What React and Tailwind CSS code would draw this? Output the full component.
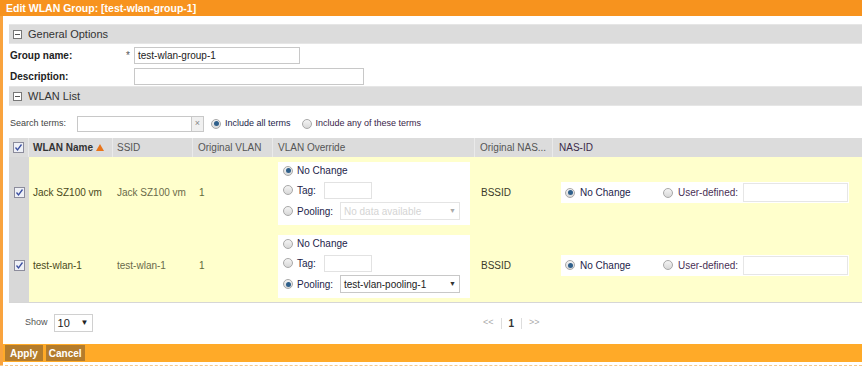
import React from 'react';

const font = { fontFamily: '"Liberation Sans", Arial, sans-serif' };

const Radio = ({ on }) => (
    <span className="inline-flex items-center justify-center w-[10px] h-[10px] rounded-full border border-[#a8a8a8] bg-gradient-to-b from-[#f4f4f4] to-[#d8d8d8] shrink-0">
        {on && <span className="w-[5px] h-[5px] rounded-full bg-[#2f5f8a]" />}
    </span>
);

const Check = () => (
    <span className="inline-flex items-center justify-center w-[11px] h-[11px] border border-[#8c8c9c] bg-[#eef0f6] shrink-0">
        <svg width="9" height="9" viewBox="0 0 9 9">
            <path d="M1.5 4.5 L3.5 7 L7.5 1.5" fill="none" stroke="#3b4fa0" strokeWidth="1.3" />
        </svg>
    </span>
);

const Minus = () => (
    <span className="inline-flex items-center justify-center w-[9px] h-[9px] border border-[#777] bg-white">
        <span className="w-[5px] h-[1px] bg-[#555]" />
    </span>
);

const SectionHeader = ({ title }) => (
    <div className="h-[20px] bg-[#dcdcdc] border-y border-[#e6e6e6] flex items-center gap-[6px] pl-[4px] text-[11px] text-[#333]">
        <Minus />
        <span>{title}</span>
    </div>
);

const Override = ({ pooling, value }) => (
    <div className="bg-white w-[192px] h-[63px] flex flex-col pl-[5px] text-[10px] text-[#1d1d4a]">
        <div className="flex items-center gap-[4px] h-[17px]">
            <Radio on={!pooling} />
            <span>No Change</span>
        </div>
        <div className="flex items-center gap-[4px] h-[20px] mt-[1px]">
            <Radio />
            <span className="w-[23px]">Tag:</span>
            <span className="w-[48px] h-[17px] border border-[#e2e2e2] bg-white" />
        </div>
        <div className="flex items-center gap-[4px] h-[22px]">
            <Radio on={pooling} />
            <span className="w-[39px]">Pooling:</span>
            <span className={`flex items-center justify-between w-[120px] h-[18px] border px-[3px] ${pooling ? 'border-[#c8c8c8] text-[#222]' : 'border-[#e4e4e4] text-[#d4d4d4]'}`}>
                <span>{value}</span>
                <span className={`text-[7px] ${pooling ? 'text-[#333]' : 'text-[#aaa]'}`}>▼</span>
            </span>
        </div>
    </div>
);

const NasId = () => (
    <div className="bg-white w-[288px] h-[21px] flex items-center text-[10px] ml-[8px]">
        <div className="flex items-center gap-[5px] pl-[4px] w-[102px] text-[#1d1d4a]">
            <Radio on />
            <span>No Change</span>
        </div>
        <div className="flex items-center gap-[5px] text-[#4a2f55]">
            <Radio />
            <span>User-defined:</span>
        </div>
        <span className="ml-[5px] w-[105px] h-[19px] border border-[#e6e6e6]" />
    </div>
);

const Row = ({ name, ssid, pooling, value, h, boxPad }) => (
    <div className={`flex ${h} bg-[#ffffcc] text-[10px]`}>
        <div className="w-[20px] bg-[#d8d8d8] flex items-center justify-center">
            <Check />
        </div>
        <div className="w-[84px] flex items-center pl-[4px] text-[#4a4a20]">{name}</div>
        <div className="w-[80px] flex items-center pl-[4px] text-[#6a6a4a]">{ssid}</div>
        <div className="w-[80px] flex items-center pl-[6px] text-[#5f6a3a]">1</div>
        <div className={`w-[202px] flex items-start ${boxPad} pl-[5px]`}>
            <Override pooling={pooling} value={value} />
        </div>
        <div className="w-[78px] flex items-center pl-[6px] text-[#3a3a2a]">BSSID</div>
        <div className="flex-1 flex items-center">
            <NasId />
        </div>
    </div>
);

const App = () => {
    return (
        <div className="w-[865px] h-[369px] bg-white relative overflow-hidden" style={font}>
            <div className="w-[862px] h-[16px] bg-[#f7931e] text-white font-bold text-[10.5px] leading-[16px] pl-[6px]">
                Edit WLAN Group: [test-wlan-group-1]
            </div>
            <div className="w-[862px] h-[350px] border-l-[3px] border-[#f9a33e] flex flex-col">
                <div className="pl-[6px] pt-[8px]">
                    <SectionHeader title="General Options" />
                    <div className="flex items-center h-[22px] text-[10px] text-[#222]">
                        <span className="w-[117px] pl-[1px] font-bold">Group name:</span>
                        <span className="w-[8px] text-[#555]">*</span>
                        <span className="w-[166px] h-[17px] border border-[#c8c8c8] flex items-center pl-[3px] text-[#222] font-normal">test-wlan-group-1</span>
                    </div>
                    <div className="flex items-center h-[20px] text-[10px] text-[#222]">
                        <span className="w-[125px] pl-[1px] font-bold">Description:</span>
                        <span className="w-[230px] h-[17px] border border-[#c8c8c8]" />
                    </div>
                    <SectionHeader title="WLAN List" />
                    <div className="flex items-center h-[19px] mt-[8px] text-[9px] pl-[1px]">
                        <span className="w-[67px] text-[#444]">Search terms:</span>
                        <span className="w-[115px] h-[16px] border border-[#c8c8c8]" />
                        <span className="w-[12px] h-[16px] border border-l-0 border-[#c8c8c8] bg-[#f0f0f0] flex items-center justify-center text-[#888] text-[9px]">×</span>
                        <span className="ml-[7px] flex items-center gap-[4px] text-[#1d1d4a]">
                            <Radio on />
                            Include all terms
                        </span>
                        <span className="ml-[11px] flex items-center gap-[4px] text-[#3a1d4a]">
                            <Radio />
                            Include any of these terms
                        </span>
                    </div>
                    <div className="mt-[5px] border-b border-[#d6d6d6]">
                        <div className="flex h-[19px] bg-[#dcdcdc] text-[10px] text-[#555] items-center">
                            <div className="w-[20px] flex justify-center border-r border-[#eaeaea] h-full items-center">
                                <Check />
                            </div>
                            <div className="w-[84px] pl-[4px] font-bold text-[#333] flex items-center gap-[3px] border-r border-[#eaeaea] h-full">
                                WLAN Name
                                <svg width="8" height="7" viewBox="0 0 8 7"><path d="M4 0 L8 7 L0 7 Z" fill="#e8741a" /></svg>
                            </div>
                            <div className="w-[80px] pl-[4px] border-r border-[#eaeaea] h-full flex items-center">SSID</div>
                            <div className="w-[80px] pl-[5px] border-r border-[#eaeaea] h-full flex items-center">Original VLAN</div>
                            <div className="w-[202px] pl-[5px] border-r border-[#eaeaea] h-full flex items-center">VLAN Override</div>
                            <div className="w-[78px] pl-[5px] border-r border-[#eaeaea] h-full flex items-center">Original NAS...</div>
                            <div className="flex-1 pl-[6px] h-full flex items-center text-[#3a2a4a]">NAS-ID</div>
                        </div>
                        <Row name="Jack SZ100 vm" ssid="Jack SZ100 vm" value="No data available" h="h-[71px]" boxPad="pt-[5px]" />
                        <Row name="test-wlan-1" ssid="test-wlan-1" pooling value="test-vlan-pooling-1" h="h-[74px]" boxPad="pt-[7px]" />
                    </div>
                    <div className="flex items-center h-[40px] text-[9px]">
                        <div className="w-[420px] flex items-center pl-[16px] gap-[6px]">
                            <span className="text-[#555]">Show</span>
                            <span className="w-[39px] h-[18px] border border-[#d0d0d0] flex items-center justify-between px-[3px] text-[11px] text-[#222]">
                                10<span className="text-[8px] text-[#222]">▼</span>
                            </span>
                        </div>
                        <div className="flex items-center gap-[7px] ml-[54px] text-[9px] text-[#aaa]">
                            <span>&lt;&lt;</span>
                            <span className="w-px h-[11px] bg-[#ddd]" />
                            <span className="font-bold text-[#333] text-[10px]">1</span>
                            <span className="w-px h-[11px] bg-[#ddd]" />
                            <span>&gt;&gt;</span>
                        </div>
                    </div>
                </div>
                <div className="mt-auto h-[18px] bg-[#ffaa28] flex items-center gap-[3px] pl-[2px] mb-[4px]">
                    <span className="h-[16px] px-[5px] bg-[#b47c2c] text-white font-bold text-[10px] flex items-center">Apply</span>
                    <span className="h-[16px] px-[3px] bg-[#b47c2c] text-white font-bold text-[10px] flex items-center">Cancel</span>
                </div>
            </div>
            <div className="absolute left-0 top-[365px] w-[862px] border-t border-dashed border-[#f6c88a]" />
        </div>
    );
};

export default App;
